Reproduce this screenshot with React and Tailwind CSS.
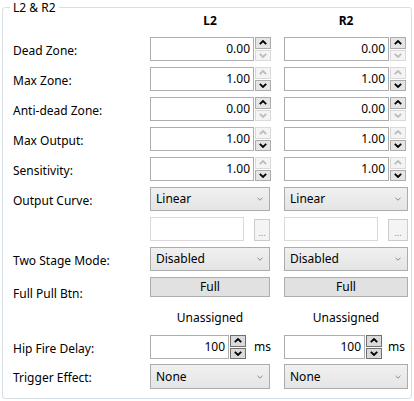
import React from "react";

const font = { fontFamily: '"Segoe UI", "Noto Sans", sans-serif' };

function Chevron({ up, enabled }) {
  return (
    <svg width="8" height="5" viewBox="0 0 8 5" className="block">
      <polyline
        points={up ? "0.8,4.2 4,1 7.2,4.2" : "0.8,0.8 4,4 7.2,0.8"}
        fill="none"
        stroke={enabled ? "#000" : "#bcbcbc"}
        strokeWidth="1.8"
      />
    </svg>
  );
}

function SpinBtn({ up, enabled, strong }) {
  const cls = strong
    ? "border-[#707070] bg-[#dadada]"
    : enabled
    ? "border-[#acacac] bg-[#e5e5e5]"
    : "border-[#d9d9d9] bg-[#f4f4f4]";
  return (
    <div className={`flex-1 flex items-center justify-center border ${cls}`}>
      <Chevron up={up} enabled={enabled} />
    </div>
  );
}

function Spinner({ value, upOn, downOn, inputW, strong }) {
  return (
    <div className="flex h-[24px]">
      <div
        className="h-full border border-[#abadb3] bg-white flex items-center justify-end pr-[3px] text-[12px] text-black"
        style={{ width: inputW }}
      >
        {value}
      </div>
      <div className="flex flex-col w-[16px] h-full gap-px ml-px">
        <SpinBtn up enabled={upOn} strong={strong} />
        <SpinBtn enabled={downOn} strong={strong} />
      </div>
    </div>
  );
}

function Dropdown({ text, w, h = 24 }) {
  return (
    <div
      className="border border-[#acacac] bg-gradient-to-b from-[#f0f0f0] to-[#e5e5e5] flex items-center justify-between pl-[5px] pr-[6px] text-[12px] text-black"
      style={{ width: w, height: h }}
    >
      <span>{text}</span>
      <svg width="6" height="4" viewBox="0 0 6 4">
        <polyline points="0.5,0.8 3,3.2 5.5,0.8" fill="none" stroke="#8a8a8a" strokeWidth="1" />
      </svg>
    </div>
  );
}

function Row({ label, left, right, cls = "", labelCls = "pt-[3px]" }) {
  return (
    <div className={`flex ${cls}`}>
      <div className={`w-[137px] shrink-0 flex items-center text-[12px] text-black ${labelCls}`}>
        {label}
      </div>
      <div className="w-[134px] shrink-0 flex items-center">{left}</div>
      <div className="flex items-center">{right}</div>
    </div>
  );
}

function Ellipsis({ w }) {
  return (
    <div className="flex items-end h-[24px]">
      <div className="w-[94px] h-[24px] border border-[#d9d9d9] bg-white" />
      <div
        className="ml-[10px] h-[22px] border border-[#cccccc] bg-[#f4f4f4] flex items-end justify-center pb-[3px] text-[9px] leading-none text-[#8c8c8c]"
        style={{ width: w }}
      >
        ...
      </div>
    </div>
  );
}

function FullBtn({ w }) {
  return (
    <div
      className="h-[20px] border border-[#adadad] bg-[#e1e1e1] flex items-center justify-center text-[12px] text-black"
      style={{ width: w }}
    >
      Full
    </div>
  );
}

export default function App() {
  const spinRows = [
    ["Dead Zone:", "0.00", true, false],
    ["Max Zone:", "1.00", false, true],
    ["Anti-dead Zone:", "0.00", true, false],
    ["Max Output:", "1.00", false, true],
    ["Sensitivity:", "1.00", false, true],
  ];
  return (
    <div className="w-[414px] h-[401px] bg-white relative" style={font}>
      <fieldset className="absolute left-[2px] top-0 w-[410px] h-[399px] border border-[#d5dfe5] rounded-[3px] pl-[10px] pr-0 m-0">
        <legend className="-ml-[3px] px-[3px] text-[12px] leading-[15px] text-black">L2 &amp; R2</legend>
        <div className="flex -mt-[3px] h-[16px] text-[12px] font-bold text-black">
          <div className="w-[137px]" />
          <div className="w-[120px] text-center">L2</div>
          <div className="w-[14px]" />
          <div className="w-[124px] text-center">R2</div>
        </div>
        <div className="flex flex-col gap-[6px] mt-[9px]">
          {spinRows.map(([l, v, u, d]) => (
            <Row
              key={l}
              label={l}
              left={<Spinner value={v} upOn={u} downOn={d} inputW={104} />}
              right={<Spinner value={v} upOn={u} downOn={d} inputW={105} />}
            />
          ))}
          <Row
            label="Output Curve:"
            left={<Dropdown text="Linear" w={120} />}
            right={<Dropdown text="Linear" w={124} />}
          />
          <Row label="" left={<Ellipsis w={16} />} right={<Ellipsis w={20} />} />
          <Row
            label="Two Stage Mode:"
            left={<Dropdown text="Disabled" w={120} />}
            right={<Dropdown text="Disabled" w={124} />}
          />
          <Row
            cls="h-[20px]"
            label="Full Pull Btn:"
            labelCls="items-start pt-[8px] h-[20px] overflow-visible"
            left={<FullBtn w={120} />}
            right={<FullBtn w={124} />}
          />
        </div>
        <div className="flex mt-[12px] h-[16px] text-[12px] text-black">
          <div className="w-[137px]" />
          <div className="w-[120px] text-center">Unassigned</div>
          <div className="w-[14px]" />
          <div className="w-[124px] text-center">Unassigned</div>
        </div>
        <div className="flex flex-col gap-[5px] mt-[10px]">
          <Row
            cls="h-[24px]"
            label="Hip Fire Delay:"
            left={
              <div className="flex items-center">
                <Spinner value="100" upOn downOn inputW={79} strong />
                <span className="ml-[8px] text-[12px] text-black">ms</span>
              </div>
            }
            right={
              <div className="flex items-center">
                <Spinner value="100" upOn downOn inputW={81} strong />
                <span className="ml-[6px] text-[12px] text-black">ms</span>
              </div>
            }
          />
          <Row
            cls="h-[25px]"
            label="Trigger Effect:"
            left={<Dropdown text="None" w={120} h={25} />}
            right={<Dropdown text="None" w={124} h={25} />}
          />
        </div>
      </fieldset>
    </div>
  );
}
